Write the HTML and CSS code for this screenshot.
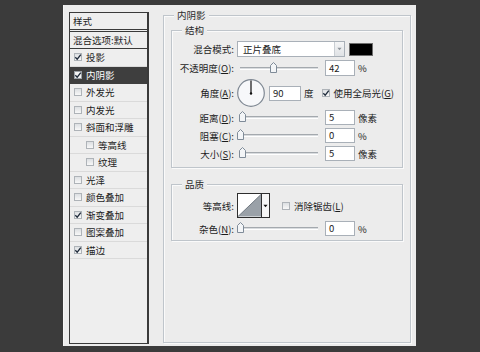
FILE: index.html
```html
<!DOCTYPE html>
<html lang="zh-CN">
<head>
<meta charset="utf-8">
<title>图层样式 - 内阴影</title>
<link rel="stylesheet" href="styles.css">
</head>
<body>
<div class="dialog">
  <div class="styles-list">
    <div class="list-header">样式</div>
    <div class="list-blend">混合选项:默认</div>
    <div class="item"><span class="cb checked"><svg viewBox="0 0 8 8"><path d="M1.3 4.2 L3.2 6.2 L6.8 1.6"/></svg></span>投影</div>
    <div class="item selected"><span class="cb checked"><svg viewBox="0 0 8 8"><path d="M1.3 4.2 L3.2 6.2 L6.8 1.6"/></svg></span>内阴影</div>
    <div class="item"><span class="cb"></span>外发光</div>
    <div class="item"><span class="cb"></span>内发光</div>
    <div class="item"><span class="cb"></span>斜面和浮雕</div>
    <div class="item sub"><span class="cb"></span>等高线</div>
    <div class="item sub"><span class="cb"></span>纹理</div>
    <div class="item"><span class="cb"></span>光泽</div>
    <div class="item"><span class="cb"></span>颜色叠加</div>
    <div class="item"><span class="cb checked"><svg viewBox="0 0 8 8"><path d="M1.3 4.2 L3.2 6.2 L6.8 1.6"/></svg></span>渐变叠加</div>
    <div class="item"><span class="cb"></span>图案叠加</div>
    <div class="item"><span class="cb checked"><svg viewBox="0 0 8 8"><path d="M1.3 4.2 L3.2 6.2 L6.8 1.6"/></svg></span>描边</div>
  </div>

  <div class="main">
    <div class="group group-outer">
      <span class="group-title">内阴影</span>

      <div class="group group-structure">
        <span class="group-title">结构</span>
        <div class="form">
          <div class="row h16">
            <span class="label">混合模式:</span>
            <div class="ctrl">
              <div class="select"><span class="select-text">正片叠底</span><span class="select-btn"><svg viewBox="0 0 6 4"><path d="M0.5 0.5 H5.5 L3 3.5 Z"/></svg></span></div>
              <span class="swatch"></span>
            </div>
          </div>
          <div class="row h16">
            <span class="label">不透明度(<u>O</u>):</span>
            <div class="ctrl">
              <div class="slider"><span class="thumb" style="left: 42%"><svg viewBox="0 0 7 11"><path d="M0.5 3.5 L3.5 0.5 L6.5 3.5 V10.5 H0.5 Z"/></svg></span></div>
              <span class="input">42</span>
              <span class="unit">%</span>
            </div>
          </div>
          <div class="row h28">
            <span class="label">角度(<u>A</u>):</span>
            <div class="ctrl">
              <span class="dial"><svg viewBox="0 0 28 28"><circle cx="14" cy="14" r="13.3" class="dial-face"/><line x1="14" y1="14" x2="14" y2="1.5" class="dial-hand"/><circle cx="14" cy="14.5" r="1.2" class="dial-dot"/></svg></span>
              <span class="input input-wide">90</span>
              <span class="unit">度</span>
              <span class="cb checked global"><svg viewBox="0 0 8 8"><path d="M1.3 4.2 L3.2 6.2 L6.8 1.6"/></svg></span>
              <span class="cb-label">使用全局光(<u>G</u>)</span>
            </div>
          </div>
          <div class="row h15">
            <span class="label">距离(<u>D</u>):</span>
            <div class="ctrl">
              <div class="slider"><span class="thumb" style="left: 2%"><svg viewBox="0 0 7 11"><path d="M0.5 3.5 L3.5 0.5 L6.5 3.5 V10.5 H0.5 Z"/></svg></span></div>
              <span class="input">5</span>
              <span class="unit">像素</span>
            </div>
          </div>
          <div class="row h15">
            <span class="label">阻塞(<u>C</u>):</span>
            <div class="ctrl">
              <div class="slider"><span class="thumb" style="left: 0%"><svg viewBox="0 0 7 11"><path d="M0.5 3.5 L3.5 0.5 L6.5 3.5 V10.5 H0.5 Z"/></svg></span></div>
              <span class="input">0</span>
              <span class="unit">%</span>
            </div>
          </div>
          <div class="row h15">
            <span class="label">大小(<u>S</u>):</span>
            <div class="ctrl">
              <div class="slider"><span class="thumb" style="left: 2%"><svg viewBox="0 0 7 11"><path d="M0.5 3.5 L3.5 0.5 L6.5 3.5 V10.5 H0.5 Z"/></svg></span></div>
              <span class="input">5</span>
              <span class="unit">像素</span>
            </div>
          </div>
        </div>
      </div>

      <div class="group group-quality">
        <span class="group-title">品质</span>
        <div class="form form-quality">
          <div class="row h25">
            <span class="label">等高线:</span>
            <div class="ctrl">
              <div class="contour">
                <span class="contour-preview"><svg viewBox="0 0 24 23"><path d="M0 23 L24 0 V23 Z" class="contour-fill"/><path d="M0 23 L24 0" class="contour-line"/></svg></span>
                <span class="contour-btn"><svg viewBox="0 0 6 4"><path d="M0.5 0.5 H5.5 L3 3.5 Z"/></svg></span>
              </div>
              <span class="cb aa"></span>
              <span class="cb-label">消除锯齿(<u>L</u>)</span>
            </div>
          </div>
          <div class="row h15">
            <span class="label">杂色(<u>N</u>):</span>
            <div class="ctrl">
              <div class="slider"><span class="thumb" style="left: 0%"><svg viewBox="0 0 7 11"><path d="M0.5 3.5 L3.5 0.5 L6.5 3.5 V10.5 H0.5 Z"/></svg></span></div>
              <span class="input">0</span>
              <span class="unit">%</span>
            </div>
          </div>
        </div>
      </div>
    </div>
  </div>
</div>
</body>
</html>
```

FILE: styles.css
```css
* { box-sizing: border-box; }

html, body {
  margin: 0;
  padding: 0;
}

body {
  width: 480px;
  height: 352px;
  background: #3b3b3b;
  font-family: "Noto Sans CJK SC", "Noto Sans", sans-serif;
  font-size: 9.5px;
  color: #1c1c1c;
  overflow: hidden;
}

u { text-decoration: underline; text-underline-offset: 1px; }

.dialog {
  margin: 5px 0 0 63px;
  width: 353px;
  height: 341px;
  background: #ececec;
  border-left: 1px solid #f6f6f6;
  display: flex;
  padding: 7px 0 0 5px;
}

/* ---------- left style list ---------- */
.styles-list {
  width: 80px;
  height: 332px;
  border: 1px solid #3a3a3a;
  border-right-width: 2px;
  background: #eeeeee;
  display: flex;
  flex-direction: column;
}

.list-header {
  height: 17px;
  border-bottom: 1px solid #3a3a3a;
  padding-left: 3px;
  display: flex;
  align-items: center;
}

.list-blend {
  margin-top: 1px;
  height: 18px;
  border-top: 1px solid #3a3a3a;
  border-bottom: 1px solid #3a3a3a;
  padding-left: 3px;
  display: flex;
  align-items: center;
}

.item {
  height: 17.5px;
  border-bottom: 1px solid #dadada;
  padding-left: 4px;
  display: flex;
  align-items: center;
  gap: 4px;
}

.item.sub { padding-left: 16px; }

.item.selected {
  background: #3e3e3e;
  color: #ffffff;
  border-bottom-color: #3e3e3e;
}

/* ---------- checkbox ---------- */
.cb {
  width: 8px;
  height: 8px;
  flex: none;
  border: 1px solid #aeb3b8;
  background: linear-gradient(#dcdfe2, #f8f8f8);
  display: inline-flex;
}

.cb svg { width: 8px; height: 8px; margin: -1px 0 0 -1px; overflow: visible; }
.cb svg path { fill: none; stroke: #1e2a3a; stroke-width: 1.3; }
.item.selected .cb { background: #f4f4f4; border-color: #9aa0a6; }

/* ---------- right side ---------- */
.main {
  margin-left: 14px;
  margin-top: 3px;
  width: 248px;
  height: 328px;
}

.group {
  position: relative;
  border: 1px solid #bfc5cb;
  box-shadow: inset 1px 1px 0 #fafafa, 1px 1px 0 #fafafa;
}

.group-title {
  position: absolute;
  top: -8px;
  left: 10px;
  padding: 0 3px;
  background: #ececec;
  line-height: 14px;
  color: #2a2a2a;
}

.group-outer {
  height: 328px;
  padding: 14px 7px 0 7px;
}

.group-structure {
  height: 138px;
  padding-top: 10px;
}

.group-quality {
  margin-top: 16px;
  height: 57px;
  padding-top: 8px;
}

.form {
  display: flex;
  flex-direction: column;
  gap: 3px;
}

.row {
  display: grid;
  grid-template-columns: 62px 1fr;
  column-gap: 3px;
  align-items: center;
}

.h15 { height: 15px; }
.h16 { height: 16px; }
.h25 { height: 25px; }
.h28 { height: 28px; }

.label {
  text-align: right;
  white-space: nowrap;
  line-height: 14px;
}

.ctrl {
  display: flex;
  align-items: center;
  height: 100%;
  white-space: nowrap;
}

/* select */
.select {
  width: 108px;
  height: 16px;
  border: 1px solid #a9b0b8;
  background: #ffffff;
  display: flex;
}

.select-text {
  flex: 1;
  padding-left: 5px;
  line-height: 14px;
}

.select-btn {
  width: 10px;
  border-left: 1px solid #c9ced3;
  background: linear-gradient(#f4f5f6, #dfe2e5);
  display: flex;
  align-items: center;
  justify-content: center;
}

.select-btn svg, .contour-btn svg { width: 5px; height: 4px; }
.select-btn svg path { fill: #8c939a; }

.swatch {
  margin-left: 4px;
  width: 24px;
  height: 13px;
  background: #000000;
  border: 1px solid #6f6f6f;
}

/* slider */
.slider {
  position: relative;
  margin-left: 3px;
  width: 78px;
  height: 3px;
  border-top: 1px solid #a4a9ae;
  border-bottom: 1px solid #ffffff;
  background: #d9dcdf;
}

.thumb {
  position: absolute;
  top: -6px;
  width: 7px;
  height: 11px;
  margin-left: -3px;
}

.thumb svg { width: 7px; height: 11px; display: block; }
.thumb svg path { fill: #f3f5f7; stroke: #7f8b98; stroke-width: 1; }

/* inputs */
.input {
  margin-left: 7px;
  width: 30px;
  height: 16px;
  border: 1px solid #a9b0b8;
  background: #ffffff;
  padding-left: 3px;
  line-height: 14px;
}

.h15 .input { height: 15px; line-height: 13px; }

.unit {
  margin-left: 3px;
}

/* dial */
.dial {
  width: 28px;
  height: 28px;
  flex: none;
}

.dial svg { width: 28px; height: 28px; display: block; }
.dial-face { fill: #f7f8fa; stroke: #7f8893; stroke-width: 1.2; }
.dial-hand { stroke: #111111; stroke-width: 1.2; }
.dial-dot { fill: #111111; }

.input-wide {
  margin-left: 4px;
  width: 32px;
  height: 15px;
  line-height: 13px;
}

.unit + .cb.global { margin-left: 8px; }

.cb-label { margin-left: 4px; }

/* contour */
.contour {
  width: 33px;
  height: 25px;
  border: 1px solid #2e2e2e;
  display: flex;
  background: #ffffff;
}

.contour-preview {
  width: 24px;
  height: 23px;
  border-right: 1px solid #2e2e2e;
}

.contour-preview svg { width: 23px; height: 23px; display: block; }
.contour-fill { fill: #9aa1a8; }
.contour-line { stroke: #6e767e; stroke-width: 1; fill: none; }

.contour-btn {
  flex: 1;
  display: flex;
  align-items: center;
  justify-content: center;
  background: #f6f6f6;
}

.contour-btn svg path { fill: #111111; }

.cb.aa { margin-left: 12px; }
```
